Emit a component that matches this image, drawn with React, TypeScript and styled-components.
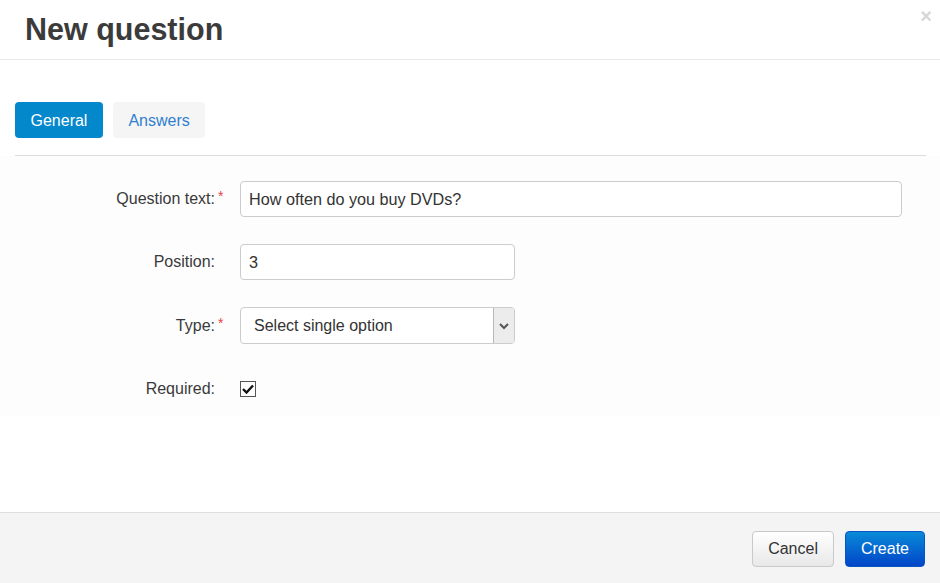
import React from "react";
import styled, { createGlobalStyle } from "styled-components";

const Global = createGlobalStyle`
  html, body { margin: 0; padding: 0; background: #fff; }
  body { font-family: "Liberation Sans", Arial, sans-serif; color: #333; }
  * { box-sizing: border-box; }
`;

const Modal = styled.div`
  width: 940px;
  height: 583px;
  display: flex;
  flex-direction: column;
  background: #fff;
  overflow: hidden;
`;

const Header = styled.div`
  position: relative;
  height: 60px;
  border-bottom: 1px solid #e9e9e9;
  padding: 10px 25px 0;
`;

const Title = styled.h1`
  margin: 0;
  font-size: 30.5px;
  line-height: 38px;
  font-weight: bold;
  color: #3b3b3b;
`;

const Close = styled.span`
  position: absolute;
  top: 6px;
  right: 8px;
  font-size: 20px;
  font-weight: bold;
  color: #d6d6d6;
  line-height: 20px;
`;

const Body = styled.div`
  flex: 1;
  display: flex;
  flex-direction: column;
`;

const TabBar = styled.div`
  margin: 42px 14px 0 15px;
  padding-bottom: 17px;
  border-bottom: 1px solid #dddddd;
  display: flex;
  gap: 10px;
`;

const Tab = styled.button<{ $active?: boolean }>`
  height: 36px;
  padding: 1px 15.5px 0;
  border: none;
  border-radius: 4px;
  font-family: inherit;
  font-size: 16px;
  background: ${(p) => (p.$active ? "#0388cc" : "#f5f5f5")};
  color: ${(p) => (p.$active ? "#ffffff" : "#2f7fd0")};
  cursor: pointer;
`;

const Form = styled.div`
  background: #fdfdfd;
  padding: 25px 38px 9px 0;
  display: flex;
  flex-direction: column;
  gap: 27px;
`;

const Row = styled.div`
  display: flex;
  align-items: center;
  min-height: 36px;
`;

const Label = styled.label`
  position: relative;
  width: 215px;
  flex: none;
  text-align: right;
  font-size: 16px;
  color: #3a3a3a;
  margin-right: 25px;
`;

const Req = styled.span`
  position: absolute;
  left: 218px;
  top: -2px;
  color: #e8434a;
  font-size: 14px;
`;

const Input = styled.div<{ $w?: number }>`
  height: 36px;
  width: ${(p) => (p.$w ? `${p.$w}px` : "100%")};
  flex: ${(p) => (p.$w ? "none" : "1")};
  border: 1px solid #cccccc;
  border-radius: 4px;
  background: #fff;
  padding: 0 8px;
  display: flex;
  align-items: center;
  font-size: 16.2px;
  color: #333;
`;

const Select = styled.div`
  height: 37px;
  width: 275px;
  border: 1px solid #cccccc;
  border-radius: 4px;
  background: #fff;
  display: flex;
  align-items: stretch;
  overflow: hidden;
  font-size: 16px;
  color: #333;
`;

const SelectText = styled.span`
  flex: 1;
  display: flex;
  align-items: center;
  padding-left: 13px;
`;

const SelectButton = styled.span`
  width: 21px;
  border-left: 1px solid #b9b9b9;
  background: #ececec;
  display: flex;
  align-items: center;
  justify-content: center;
`;

const CheckBox = styled.span`
  width: 16px;
  height: 16px;
  border: 1px solid #555;
  background: #fff;
  display: flex;
  align-items: center;
  justify-content: center;
`;

const Footer = styled.div`
  margin-top: auto;
  height: 71px;
  border-top: 1px solid #dddddd;
  background: #f4f4f4;
  display: flex;
  justify-content: flex-end;
  align-items: flex-start;
  gap: 11px;
  padding: 18px 15px 0 0;
`;

const Button = styled.button<{ $primary?: boolean }>`
  height: 36px;
  padding: 0 15px;
  border-radius: 4px;
  font-family: inherit;
  font-size: 16px;
  border: 1px solid ${(p) => (p.$primary ? "#0a55c4" : "#c9c9c9")};
  color: ${(p) => (p.$primary ? "#fff" : "#333")};
  background: ${(p) =>
    p.$primary
      ? "linear-gradient(#0a8ad8, #0046c8)"
      : "linear-gradient(#ffffff, #e8e8e8)"};
`;

export default function App() {
  return (
    <>
      <Global />
      <Modal>
        <Header>
          <Title>New question</Title>
          <Close>×</Close>
        </Header>
        <Body>
          <TabBar>
            <Tab $active>General</Tab>
            <Tab>Answers</Tab>
          </TabBar>
          <Form>
            <Row>
              <Label>
                Question text:<Req>*</Req>
              </Label>
              <Input>How often do you buy DVDs?</Input>
            </Row>
            <Row>
              <Label>Position:</Label>
              <Input $w={275}>3</Input>
            </Row>
            <Row>
              <Label>
                Type:<Req>*</Req>
              </Label>
              <Select>
                <SelectText>Select single option</SelectText>
                <SelectButton>
                  <svg width="10" height="8" viewBox="0 0 10 8">
                    <path d="M1 2 L5 6 L9 2" fill="none" stroke="#555" strokeWidth="2" />
                  </svg>
                </SelectButton>
              </Select>
            </Row>
            <Row>
              <Label>Required:</Label>
              <CheckBox>
                <svg width="12" height="10" viewBox="0 0 12 10">
                  <path d="M1 5 L4.5 8.5 L11 1.5" fill="none" stroke="#111" strokeWidth="2.4" />
                </svg>
              </CheckBox>
            </Row>
          </Form>
        </Body>
        <Footer>
          <Button>Cancel</Button>
          <Button $primary>Create</Button>
        </Footer>
      </Modal>
    </>
  );
}
